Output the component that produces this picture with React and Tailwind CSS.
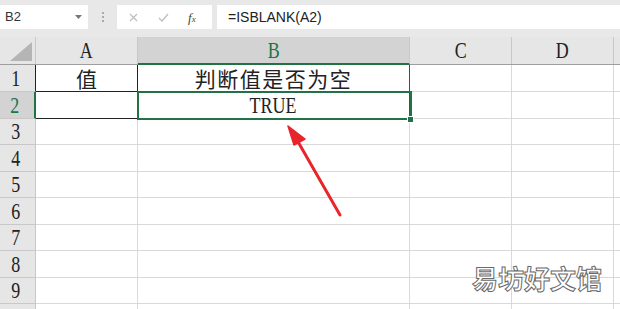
import React from "react";

const COLS = [
    { key: "A", w: "w-[102px]" },
    { key: "B", w: "w-[272px]" },
    { key: "C", w: "w-[102px]" },
    { key: "D", w: "w-[102px]" },
];
const ROW_H = [ "h-[27px]", "h-[27px]", "h-[26px]", "h-[27px]", "h-[26px]", "h-[27px]", "h-[26px]", "h-[27px]", "h-[26px]", "h-[27px]" ];

const serif = "font-['Liberation_Serif','Noto_Sans_CJK_SC',serif]";
const cjk = "font-['Noto_Sans_CJK_SC',sans-serif]";

const Latin = ( { children, className = "" } ) => (
    <span className={ `inline-block scale-x-[0.78] ${ serif } ${ className }` }>{ children }</span>
);

const cellText = ( r, c ) =>
{
    if ( r === 1 && c === "A" ) return <span className={ `${ cjk } text-[21px] leading-none text-[#222]` }>值</span>;
    if ( r === 1 && c === "B" ) return <span className={ `${ cjk } text-[21px] leading-none text-[#222] tracking-[1.5px]` }>判断值是否为空</span>;
    if ( r === 2 && c === "B" ) return <Latin className="text-[23px] leading-none text-[#222]">TRUE</Latin>;
    return null;
};

const cellBorder = ( r, c ) =>
{
    if ( r <= 2 && c === "A" ) return "border-r-[#222] border-b-[#222]";
    if ( r <= 2 && c === "B" ) return "border-r-[#2f5a40] border-b-[#2f5a40]";
    return "border-r-[#d9d9d9] border-b-[#d9d9d9]";
};

export default function App ()
{
    return (
        <div className="w-[620px] h-[309px] overflow-hidden bg-[#e8e8e8] relative">
            {/* formula bar */ }
            <div className="h-[33px] flex items-center pt-[1px]">
                <div className="w-[88px] h-[24px] bg-white flex items-center justify-between pl-[5px] pr-[6px]">
                    <span className="font-['Liberation_Sans',sans-serif] text-[13px] text-[#333]">B2</span>
                    <svg width="7" height="4" viewBox="0 0 7 4"><path d="M0 0h7L3.5 4z" fill="#777" /></svg>
                </div>
                <div className="w-[29px] flex flex-col items-center gap-[2px]">
                    <span className="w-[2px] h-[2px] bg-[#aaa]" />
                    <span className="w-[2px] h-[2px] bg-[#aaa]" />
                    <span className="w-[2px] h-[2px] bg-[#aaa]" />
                </div>
                <div className="w-[95px] h-[24px] bg-white flex items-center">
                    <svg className="ml-[12px]" width="9" height="9" viewBox="0 0 9 9"><path d="M1 1l7 7M8 1l-7 7" stroke="#bdbdbd" strokeWidth="1.2" /></svg>
                    <svg className="ml-[20px]" width="11" height="9" viewBox="0 0 11 9"><path d="M1 5l3 3 6-7" stroke="#bdbdbd" strokeWidth="1.3" fill="none" /></svg>
                    <span className="ml-[19px] font-['Liberation_Serif',serif] italic text-[13px] text-[#444] leading-none">f<span className="text-[9px]">x</span></span>
                </div>
                <div className="ml-[5px] flex-1 h-[24px] bg-white flex items-center pl-[11px]">
                    <span className="font-['Liberation_Sans',sans-serif] text-[14px] text-[#222]">=ISBLANK(A2)</span>
                </div>
            </div>
            <div className="h-[4px]" />

            {/* column header row */ }
            <div className="h-[28px] flex border-b border-b-[#9e9e9e]">
                <div className="w-[36px] border-r border-r-[#c8c8c8] relative bg-[#e6e6e6]">
                    <svg className="absolute right-[3px] bottom-[3px]" width="22" height="19" viewBox="0 0 22 19"><path d="M22 0v19H0z" fill="#b5b5b5" /></svg>
                </div>
                { COLS.map( ( col ) => (
                    <div
                        key={ col.key }
                        className={ `${ col.w } flex items-center justify-center border-r border-r-[#c8c8c8] ${ col.key === "B" ? "bg-[#d3d3d3] border-b-2 border-b-[#217346] -mb-[1px]" : "bg-[#e6e6e6]" }` }
                    >
                        <Latin className={ `text-[23px] leading-none ${ col.key === "B" ? "text-[#217346]" : "text-[#222]" }` }>{ col.key }</Latin>
                    </div>
                ) ) }
                <div className="flex-1 bg-[#e6e6e6]" />
            </div>

            {/* rows */ }
            { ROW_H.map( ( h, i ) =>
            {
                const r = i + 1;
                return (
                    <div key={ r } className={ `${ h } flex bg-white` }>
                        <div className={ `w-[36px] border-r border-b border-b-[#c8c8c8] flex items-center justify-center ${ r === 2 ? "bg-[#d3d3d3] border-r-[#217346] border-r-2" : "bg-[#e6e6e6]" } ${ r === 1 ? "border-r-[#222]" : "" } ${ r > 2 ? "border-r-[#c8c8c8]" : "" }` }>
                            { r < 10 && (
                                <Latin className={ `text-[23px] leading-none -ml-[4px] ${ r === 2 ? "text-[#217346]" : "text-[#222]" }` }>{ r }</Latin>
                            ) }
                        </div>
                        { COLS.map( ( col ) => (
                            <div key={ col.key } className={ `${ col.w } border-r border-b ${ cellBorder( r, col.key ) } flex items-center justify-center` }>
                                { cellText( r, col.key ) }
                            </div>
                        ) ) }
                        <div className="flex-1 border-b border-b-[#d9d9d9]" />
                    </div>
                );
            } ) }

            {/* selection overlay on B2 */ }
            <div className="absolute left-[137px] top-[91px] w-[275px] h-[29px] border-2 border-[#217346] pointer-events-none" />
            <div className="absolute left-[407px] top-[116px] w-[7px] h-[7px] bg-[#217346] border border-white" />

            {/* red arrow */ }
            <svg className="absolute left-0 top-0" width="620" height="309" viewBox="0 0 620 309">
                <path d="M340 215 L297 140" stroke="#e8252b" strokeWidth="3" strokeLinecap="round" />
                <path d="M288 126 L305 139 L294 145 Z" fill="#e8252b" stroke="#e8252b" strokeWidth="1.5" strokeLinejoin="round" />
            </svg>

            {/* watermark */ }
            <div className={ `absolute left-[472px] top-[265px] ${ cjk } text-[26px] leading-none text-white font-bold [-webkit-text-stroke:1px_#6a6a6a]` }>
                易坊好文馆
            </div>
        </div>
    );
}
